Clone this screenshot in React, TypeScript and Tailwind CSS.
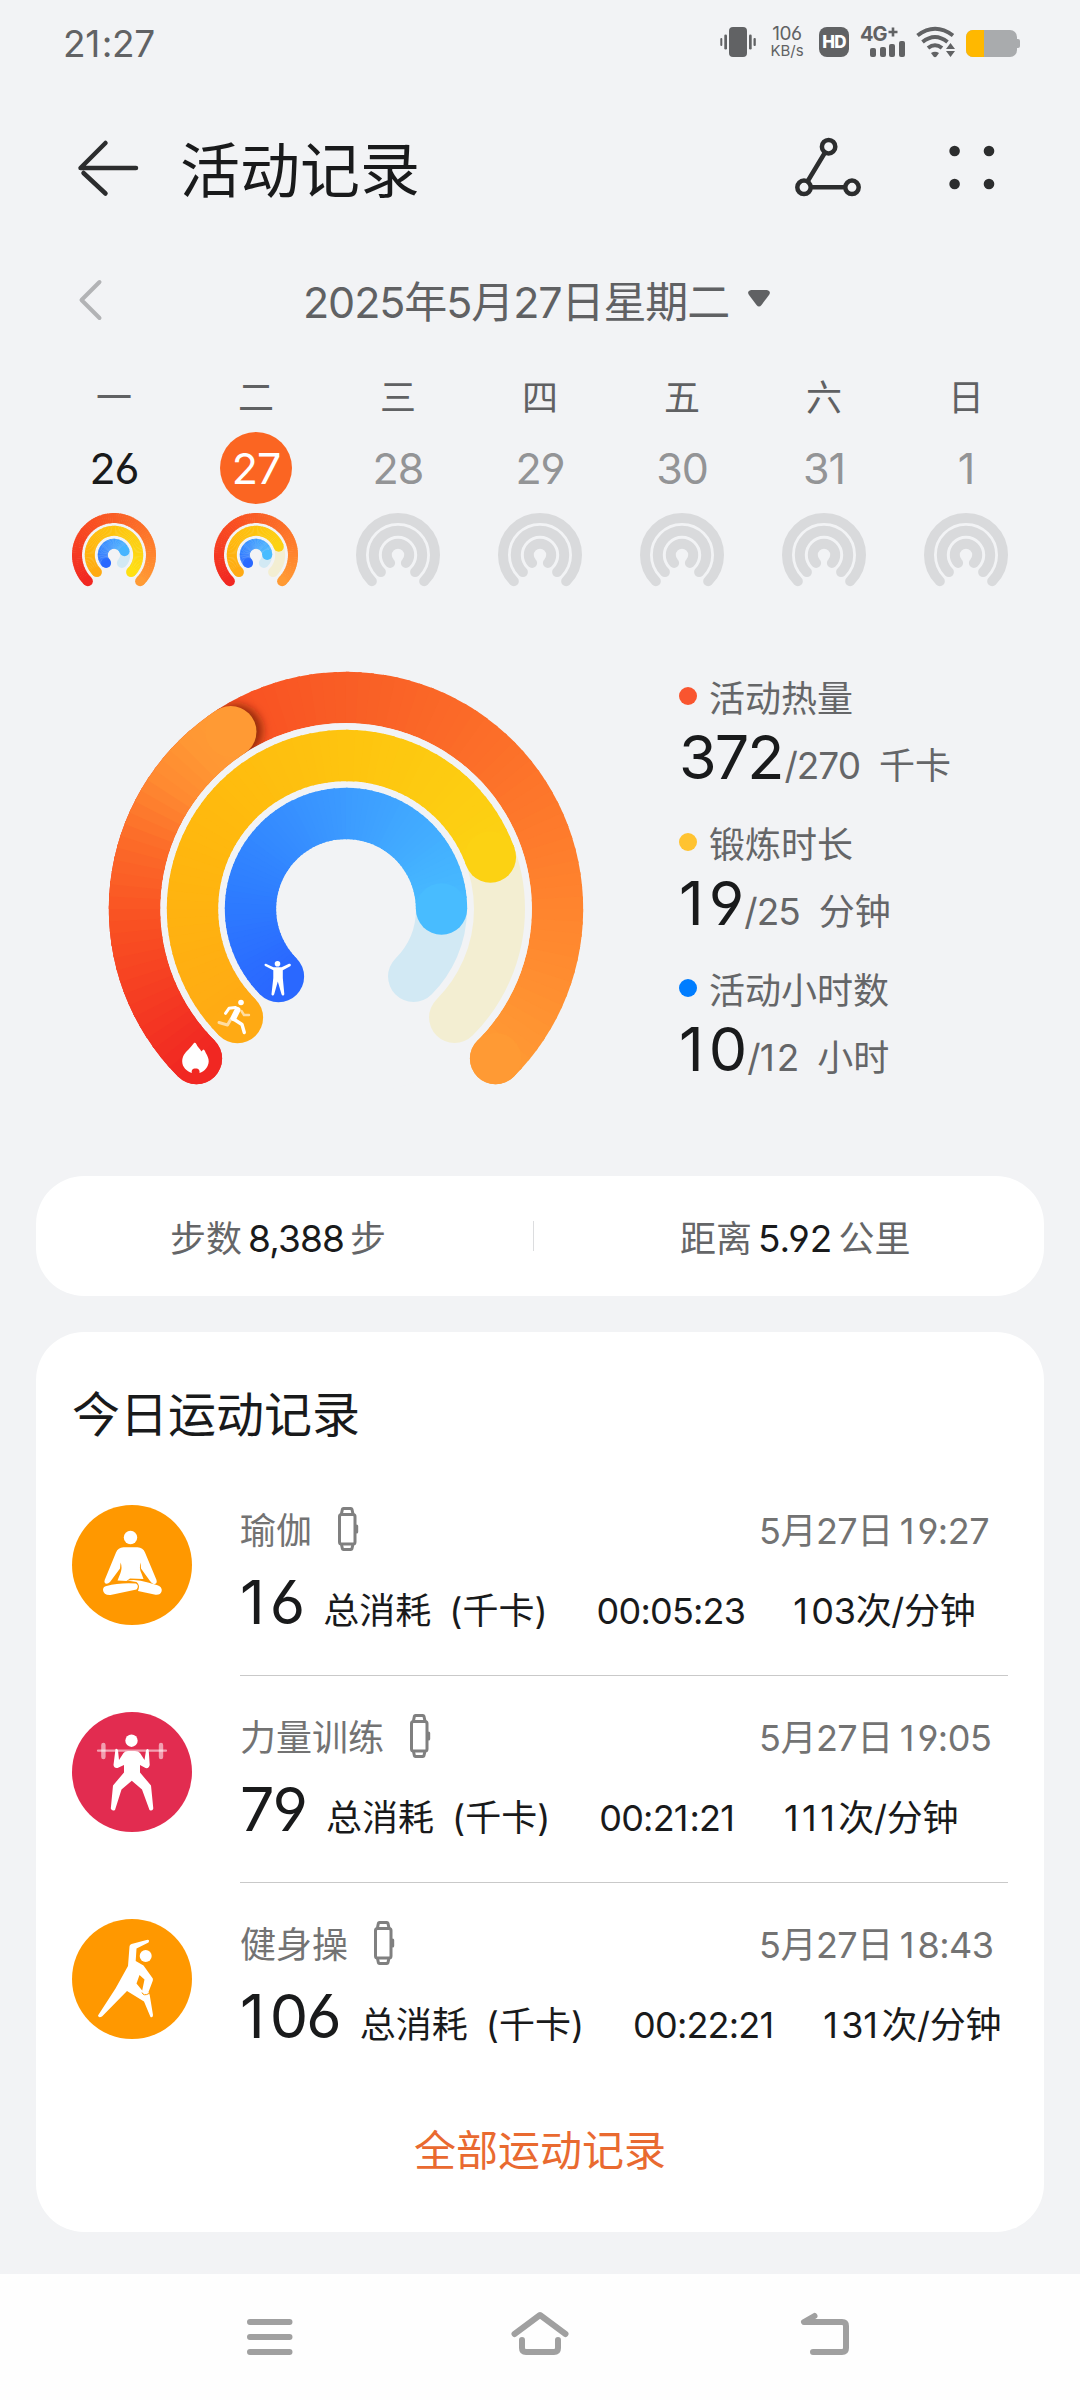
import React from "react";

type Stop = [number, string];

const RED: Stop[] = [[0, "#f12722"], [0.38, "#f95022"], [0.52, "#f96026"], [0.66, "#fc6f29"], [0.83, "#ff842e"], [1, "#ff9a34"]];
const RED_LAP: Stop[] = [[0, "#f12722"], [0.4, "#f95022"], [0.62, "#fc6c29"], [0.78, "#ff8a31"], [0.9, "#ff9734"], [1, "#ff9a34"]];
const YELLOW: Stop[] = [[0, "#ffaa14"], [0.25, "#ffb70e"], [0.5, "#fec40f"], [0.76, "#fcd213"], [1, "#ffe012"]];
const BLUE: Stop[] = [[0, "#2a68ff"], [0.2, "#2e7dff"], [0.5, "#3c9bff"], [0.83, "#48bcff"], [1, "#4cc4ff"]];

function hex(c: string) {
  return [1, 3, 5].map((i) => parseInt(c.slice(i, i + 2), 16));
}

function mix(stops: Stop[], t: number) {
  let i = 0;
  while (i < stops.length - 2 && t > stops[i + 1][0]) i++;
  const [a, ca] = stops[i];
  const [b, cb] = stops[i + 1];
  const k = Math.min(1, Math.max(0, (t - a) / (b - a)));
  const x = hex(ca);
  const y = hex(cb);
  return `rgb(${x.map((v, j) => Math.round(v + (y[j] - v) * k)).join(",")})`;
}

/* Position on a ring; 0 is the lower-left end, angles grow clockwise. */
function point(cx: number, cy: number, r: number, deg: number) {
  const a = ((225 - deg) * Math.PI) / 180;
  return [cx + r * Math.cos(a), cy - r * Math.sin(a)];
}

function arc(cx: number, cy: number, r: number, from: number, to: number) {
  const [x1, y1] = point(cx, cy, r, from);
  const [x2, y2] = point(cx, cy, r, to);
  return `M${x1} ${y1}A${r} ${r} 0 ${to - from > 180 ? 1 : 0} 1 ${x2} ${y2}`;
}

function GradientArc({ cx, cy, r, w, sweep, stops, scale = 270 }: { cx: number; cy: number; r: number; w: number; sweep: number; stops: Stop[]; scale?: number }) {
  const step = 3;
  const n = Math.ceil(sweep / step);
  const [sx, sy] = point(cx, cy, r, 0);
  const [ex, ey] = point(cx, cy, r, sweep);
  return (
    <g fill="none">
      <circle cx={sx} cy={sy} r={w / 2} fill={mix(stops, 0)} />
      {Array.from({ length: n }, (_, i) => {
        const from = i * step;
        const to = Math.min(sweep, from + step + 0.8);
        return <path key={i} d={arc(cx, cy, r, from, to)} stroke={mix(stops, (from + step / 2) / scale)} strokeWidth={w} />;
      })}
      <circle cx={ex} cy={ey} r={w / 2} fill={mix(stops, sweep / scale)} />
    </g>
  );
}

function Track({ cx, cy, r, w, color }: { cx: number; cy: number; r: number; w: number; color: string }) {
  return <path d={arc(cx, cy, r, 0, 270)} fill="none" stroke={color} strokeWidth={w} strokeLinecap="round" />;
}

function SmallRings({ progress }: { progress?: [number, number, number] }) {
  const radii = [37, 24.2, 11.2];
  const sets = [RED, YELLOW, BLUE];
  const tracks = ["#f6dfd2", "#f3eed2", "#d2e9f4"];
  return (
    <svg width="84" height="84" viewBox="0 0 84 84">
      {radii.map((r, i) => (
        <g key={r}>
          <Track cx={42} cy={42} r={r} w={10} color={progress ? tracks[i] : "#d9dadc"} />
          {progress && <GradientArc cx={42} cy={42} r={r} w={10} sweep={270 * progress[i]} stops={sets[i]} />}
        </g>
      ))}
    </svg>
  );
}

function BigRings() {
  return (
    <svg width="500" height="450" viewBox="96 650 500 450" className="shrink-0">
      <defs>
        <filter id="lap" x="-50%" y="-50%" width="220%" height="200%">
          <feGaussianBlur stdDeviation="5" />
        </filter>
        <clipPath id="outer">
          <path d={`${arc(346, 909, 237.2, 0, 270)}L346 909Z`} />
        </clipPath>
      </defs>
      <GradientArc cx={346} cy={909} r={211.5} w={51.3} sweep={270} stops={RED} />
      <g clipPath="url(#outer)">
        <circle cx={236} cy={731} r={26} fill="#6a1804" fillOpacity="0.75" filter="url(#lap)" />
      </g>
      <circle cx={346} cy={909} r={185.9} fill="#f2f3f5" />
      <GradientArc cx={346} cy={909} r={211.5} w={51.3} sweep={102} stops={RED_LAP} scale={102} />
      <circle cx={point(346, 909, 211.5, 270)[0]} cy={point(346, 909, 211.5, 270)[1]} r="25.6" fill="#ff9a34" />
      <Track cx={346} cy={909} r={153.5} w={51} color="#f3eed2" />
      <GradientArc cx={346} cy={909} r={153.5} w={51.3} sweep={205.2} stops={YELLOW} />
      <Track cx={346} cy={909} r={95.5} w={51} color="#d2e9f4" />
      <GradientArc cx={346} cy={909} r={95.5} w={51.3} sweep={225} stops={BLUE} />
      {/* flame */}
      <path fill="#fff" d="M194 1043c1-.6 1.700 0 2.300 1 1 2.800 3.700 4.500 5.200 7.500.8-1 1.300-1.900 2-2 1.200.2 1.500 2 2.300 3.500 1.600 2.700 3 5.500 2.900 8.500-.3 5.500-3.700 9.500-9.200 11.500.5-2.700-.6-4.500-3.900-4.500s-4.400 1.800-3.700 4.500c-5.400-1.700-9.600-6-9.700-11.500 0-5.200 2.700-8.500 6.300-12 2-2.200 3.800-4.500 5.500-6.500z" />
      {/* runner */}
      <g fill="none" stroke="#fff" strokeLinecap="round" strokeLinejoin="round">
        <g strokeWidth="2.400" strokeOpacity=".6">
          <path d="M241.500 1011l2.500 4h5" />
          <path d="M231 1019l-3.500 6-8.500-2.500" strokeWidth="3" />
        </g>
        <path d="M235.500 1007.500l-6.500.8-3.500 5" strokeWidth="3" />
        <path d="M237.500 1010l-4 8" strokeWidth="6" />
        <path d="M233.500 1019l8.500 5.500 2.300 8" strokeWidth="3.400" />
      </g>
      <circle cx="241" cy="1002.500" r="2.800" fill="#fff" />
      {/* standing figure */}
      <circle cx="277.500" cy="963.700" r="2.800" fill="#fff" />
      <path fill="#fff" d="M264.500 964.500c.4-.9 1.200-1 2-.6l7 3.300h8l7.500-3.400c1.800-.5 2.600 1.300 1.200 2.400l-7.400 4v7.800l1.500 16c-.2 2-2.200 2-2.800.2l-3.700-12.700-3.600 12.700c-.7 1.800-2.800 1.500-2.700-.3l1.800-15.900v-7.800l-7.700-3.900c-.8-.5-1.200-1-1.100-1.800z" />
    </svg>
  );
}

function WatchIcon() {
  return (
    <svg width="21" height="44" viewBox="0 0 21 44" fill="none" stroke="#808080" strokeWidth="3" strokeLinejoin="round">
      <rect x="1.500" y="7.500" width="15.500" height="29.500" rx="2" />
      <path d="M3.400 7L4.400 2.200Q4.600 1.500 5.400 1.500H12.900Q13.700 1.500 13.900 2.200L15 7M3.400 37l1 4.800q.2.700 1 .7h7.500q.8 0 1-.7l1.100-4.800" />
      <path d="M18.700 19v6" strokeLinecap="round" />
    </svg>
  );
}

function YogaIcon() {
  return (
    <svg width="120" height="120" viewBox="0 0 120 120" fill="#fff">
      <circle cx="58.500" cy="32.500" r="6.700" />
      <path d="M51.500 42.300H65.500Q71 42.600 73 47.500L84.500 75Q85.500 79 82 79.200Q80 78.800 78 76L69 63.500L68.600 57.500Q66.800 63 69.500 68.500L71.500 74L58 73.500L54.500 76L45.500 75.500L48.500 68Q50.500 62.500 48.600 57.500L48 63.500L38 77Q35.500 79.500 33 78.300Q32 77 32.700 75L44 47.500Q46 42.600 51.500 42.300Z" />
      <path d="M34.500 81Q47 77.500 64 78.500Q67.500 80.500 64.500 84.500L38.500 90Q31.500 90.300 31 85Q31 81.500 34.500 81Z" />
      <path d="M55 75.500Q65 73.600 76 77.500L85.500 80.200Q90.300 82 89.700 86Q88.500 90.300 83.500 89.800L66 86Q68.500 80 64.500 77Z" />
    </svg>
  );
}

function StrengthIcon() {
  return (
    <svg width="120" height="120" viewBox="0 0 120 120" fill="#fff">
      <circle cx="59.500" cy="28.700" r="6.200" />
      <g stroke="#fff" strokeOpacity=".55" strokeLinecap="round" fill="none">
        <path d="M26 38.700H94" strokeWidth="2.200" />
        <path d="M31.400 33V45M89 33V45" strokeWidth="4.400" />
      </g>
      <path d="M43.500 37Q45.500 36.300 46 38.500L47 48L51.500 41Q53 39 56 39H63Q66.500 39 68 41L72.500 48L74 38.500Q75.500 35.800 76.700 38L77.700 53Q77 56.800 73.500 56L68 53V60.500L79 73.500L81.300 96.500Q80.500 99.500 77.500 98L70 77.500L59.800 68.800L49.500 77.500L43 98Q40 99.500 38.800 96.500L41 73.500L52 60.500V53L45.500 56Q42 56.500 41.500 53Z" />
    </svg>
  );
}

function AerobicsIcon() {
  return (
    <svg width="120" height="120" viewBox="0 0 120 120" fill="#fff">
      <circle cx="73.700" cy="37" r="6" />
      <path
        fillRule="evenodd"
        d="M57.500 27.500Q57.500 25.500 59.500 25L75.500 20.800Q78 21 76.500 23.500L64.500 29.500L63.700 42L71.500 46.500L80.800 59.500Q81.200 61 80.500 62.500L76.500 73L77.700 76L81 96Q81 98.800 78.500 98L72 82.500L55 72L30 97.500Q26.500 99.500 26 96.500L43.500 69.500L56 47ZM67.500 56L64.500 64.500L70.200 71.500L72.500 60.500Z"
      />
      <path d="M70 73.500Q71.500 77.500 77 74.500" fill="none" stroke="#ff9800" strokeWidth="1" />
    </svg>
  );
}

/* Sets the narrow digit 1 with a wider advance, like the other digits. */
function Num({ text, one }: { text: string; one: string }) {
  return (
    <>
      {text.split(/(1)/).map((part, i) => (part === "1" ? <span key={i} className={one}>1</span> : part))}
    </>
  );
}

const WEEK = [
  { day: "一", date: "26", tone: "text-[#191a1b]", progress: [1, 1, 0.76] as [number, number, number] },
  { day: "二", date: "27", tone: "bg-[#fb6522] text-white", progress: [1, 0.76, 0.833] as [number, number, number] },
  { day: "三", date: "28", tone: "text-[#939496]" },
  { day: "四", date: "29", tone: "text-[#939496]" },
  { day: "五", date: "30", tone: "text-[#939496]" },
  { day: "六", date: "31", tone: "text-[#939496]" },
  { day: "日", date: "1", tone: "text-[#939496]" },
];

const STATS = [
  { dot: "bg-[#f9552f]", label: "活动热量", value: "372", goal: "/270", unit: "千卡" },
  { dot: "bg-[#ffc331]", label: "锻炼时长", value: "19", goal: "/25", unit: "分钟" },
  { dot: "bg-[#007dff]", label: "活动小时数", value: "10", goal: "/12", unit: "小时" },
];

const WORKOUTS = [
  { name: "瑜伽", color: "bg-[#ff9800]", icon: <YogaIcon />, day: "5月27日", at: "19:27", kcal: "16", time: "00:05:23", rate: "103次/分钟" },
  { name: "力量训练", color: "bg-[#e22c50]", icon: <StrengthIcon />, day: "5月27日", at: "19:05", kcal: "79", time: "00:21:21", rate: "111次/分钟" },
  { name: "健身操", color: "bg-[#ff9800]", icon: <AerobicsIcon />, day: "5月27日", at: "18:43", kcal: "106", time: "00:22:21", rate: "131次/分钟" },
];

function StatusBar() {
  return (
    <div className="flex h-[84px] items-center pl-[63px] pr-[60px] text-[#616264]">
      <span className="mt-[3px] text-[37px] leading-none tracking-[-0.4px]">
        <Num text="21:27" one="tracking-[1.5px]" />
      </span>
      <div className="ml-auto flex items-center">
        <svg width="37" height="32" viewBox="0 0 37 32" fill="#616264">
          <rect x="9" y="1" width="18" height="30" rx="4" />
          <rect x="4.300" y="8.500" width="2.700" height="15" rx="1.300" />
          <rect x="0.300" y="12" width="2" height="8" rx="1" />
          <rect x="29" y="8.500" width="2.700" height="15" rx="1.300" />
          <rect x="33.500" y="12" width="2.300" height="8" rx="1" />
        </svg>
        <div className="ml-[12px] flex w-[36px] flex-col items-center">
          <span className="text-[19px] leading-[16px] tracking-[-0.4px]">106</span>
          <span className="mt-px text-[15px] leading-[15px]">KB/s</span>
        </div>
        <div className="ml-[14px] flex h-[30px] w-[30px] items-center justify-center rounded-[8px] bg-[#616264] text-[17px] font-extrabold leading-none tracking-[-0.8px] text-white">HD</div>
        <div className="ml-[11px] flex h-[30px] w-[46px] flex-col">
          <span className="flex h-[14px] text-[20px] font-bold leading-[15px] tracking-[-1px]">
            4G
            <svg className="ml-[1px]" width="10" height="10" viewBox="0 0 10 10" stroke="#616264" strokeWidth="2.600">
              <path d="M5 0.500V9.500M0.500 5H9.500" />
            </svg>
          </span>
          <div className="ml-[10px] flex h-[16px] items-end gap-[3.500px]">
            <i className="h-[9px] w-[6px] rounded-[2px] bg-[#616264]" />
            <i className="h-[10px] w-[6px] rounded-[2px] bg-[#616264]" />
            <i className="h-[13px] w-[6px] rounded-[2px] bg-[#616264]" />
            <i className="h-[16px] w-[6px] rounded-[2px] bg-[#616264]" />
          </div>
        </div>
        <svg className="ml-[10px]" width="40" height="32" viewBox="0 0 40 32" fill="none" stroke="#616264">
          <path d="M1.500 9.500Q19 -4 37 9.500" strokeWidth="4" />
          <path d="M6.500 16Q19 6 31.500 16" strokeWidth="4" />
          <path d="M12 22Q19 16.500 26 22" strokeWidth="4" />
          <path d="M15 27Q19 24.500 23 27L20.500 30.500Q19 32 17.500 30.500Z" fill="#616264" stroke="none" />
          <path d="M34.500 17L39 23H30ZM30 25H39L34.500 31Z" fill="#616264" stroke="none" />
        </svg>
        <div className="ml-[10px] mt-[2px] flex h-[27px] w-[51px] overflow-hidden rounded-[7px] bg-[#a9abad]">
          <div className="w-[18px] bg-[#ffb800]" />
        </div>
        <div className="mt-[2px] h-[9px] w-[3px] rounded-r-[2px] bg-[#a9abad]" />
      </div>
    </div>
  );
}

export default function App() {
  return (
    <div className="flex h-[2400px] w-[1080px] flex-col overflow-hidden bg-[#f2f3f5] font-['Inter','Noto_Sans_CJK_SC',sans-serif] [font-feature-settings:'cv03','cv04']" lang="zh-CN">
      <StatusBar />

      <header className="mt-[44px] flex h-[80px] items-center pl-[76px] pr-[85px]">
        <svg width="64" height="60" viewBox="0 0 64 60" fill="none" stroke="#2c2d2e" strokeWidth="4.500" strokeLinecap="round" strokeLinejoin="round">
          <path d="M60 30H4.500L29.500 5M7.500 35L29.500 55.500" />
        </svg>
        <h1 className="ml-[40px] mt-[5px] text-[60px] leading-none text-[#191a1b]">活动记录</h1>
        <svg className="ml-auto" width="70" height="64" viewBox="0 0 70 64" fill="none" stroke="#2c2d2e" strokeWidth="4.500">
          <circle cx="35.600" cy="10.700" r="6.700" />
          <circle cx="11" cy="51.300" r="6.700" />
          <circle cx="59" cy="51.300" r="6.700" />
          <path d="M32 16.500L14.500 45.500M18 51.300H52" />
        </svg>
        <svg className="ml-[82px]" width="50" height="50" viewBox="0 0 50 50" fill="#2c2d2e">
          <circle cx="9.600" cy="8" r="5.300" />
          <circle cx="44" cy="8" r="5.300" />
          <circle cx="9.600" cy="41" r="5.300" />
          <circle cx="44" cy="41" r="5.300" />
        </svg>
      </header>

      <div className="mt-[62px] flex h-[64px] items-center">
        <svg className="-mt-1 ml-[76px]" width="28" height="44" viewBox="0 0 28 44" fill="none" stroke="#b2b3b5" strokeWidth="4" strokeLinecap="round" strokeLinejoin="round">
          <path d="M23.500 4L5.500 22L23.500 40" />
        </svg>
        <span className="ml-[199px] whitespace-nowrap text-[43px] leading-none tracking-[-1.1px] text-[#606163]">2025年5月27日星期二</span>
        <svg className="-mt-2 ml-[19px]" width="22" height="17" viewBox="0 0 22 17" fill="#606163">
          <path d="M3 0H19Q23.500 1 21 5L13.500 15Q11 18 8.500 15L1 5Q-1.500 1 3 0Z" />
        </svg>
      </div>

      <div className="mt-[44px] grid grid-cols-7 px-[43px]">
        {WEEK.map((d) => (
          <div key={d.day} className="flex flex-col items-center">
            <span className="h-[40px] text-[36px] leading-[40px] text-[#606163]">{d.day}</span>
            <span className={`mt-[14px] flex h-[72px] w-[72px] items-center justify-center rounded-full text-[43px] leading-none tracking-[-1px] ${d.tone}`}>{d.date}</span>
            <div className="mt-[9px] h-[84px]">
              <SmallRings progress={d.progress} />
            </div>
          </div>
        ))}
      </div>

      <section className="mt-[53px] flex h-[526px] pl-[96px]">
        <BigRings />
        <div className="ml-[83px] flex flex-col gap-[35px] pt-[26px]">
          {STATS.map((s) => (
            <div key={s.label} className="h-[111px]">
              <div className="flex h-[44px] items-center">
                <span className={`mb-[4px] h-[18px] w-[18px] rounded-full ${s.dot}`} />
                <span className="ml-[12px] mt-px text-[36px] leading-[44px] text-[#656668]">{s.label}</span>
              </div>
              <div className="mt-[7px] flex items-baseline whitespace-nowrap text-[36px] text-[#656668]">
                <span className="text-[61px] leading-[60px] tracking-[-2px] text-[#191a1b]">
                  <Num text={s.value} one="tracking-[5px]" />
                </span>
                <span className="ml-[2px] text-[37px] leading-none tracking-[-1px]">
                  <Num text={s.goal} one="tracking-[2px]" />
                </span>
                <span className="ml-[19px] text-[36px] leading-none">{s.unit}</span>
              </div>
            </div>
          ))}
        </div>
      </section>

      <section className="mx-[36px] flex h-[120px] shrink-0 items-center rounded-[48px] bg-white text-[36px] leading-none text-[#656668]">
        <div className="flex w-[497px] items-baseline pl-[134px] pt-[4px]">
          步数<span className="mx-[6px] text-[37px] tracking-[-0.9px] text-[#191a1b]">8,388</span>步
        </div>
        <div className="h-[30px] w-px bg-[#dcdddf]" />
        <div className="flex items-baseline pl-[146px] pt-[4px]">
          距离<span className="mx-[6px] text-[37px] tracking-[0px] text-[#191a1b]">5.92</span>公里
        </div>
      </section>

      <section className="mx-[36px] mt-[36px] h-[900px] shrink-0 rounded-[48px] bg-white pl-[36px] pr-[36px]">
        <h2 className="pt-[59px] text-[48px] leading-[48px] text-[#191a1b]">今日运动记录</h2>
        <div className="mt-[30px]">
          {WORKOUTS.map((w, i) => (
            <div key={w.name} className="flex h-[207px]">
              <div className={`mt-[36px] h-[120px] w-[120px] shrink-0 rounded-full ${w.color}`}>{w.icon}</div>
              <div className={`ml-[48px] flex w-[768px] flex-col ${i < 2 ? "border-b border-[#c9c9c9]" : ""}`}>
                <div className="mt-[38px] flex h-[44px] items-center text-[36px] leading-[44px] text-[#737373]">
                  <span className="mt-[4px]">{w.name}</span>
                  <div className="ml-[26px]">
                    <WatchIcon />
                  </div>
                  <div className="ml-auto mt-[3px] flex w-[249px] whitespace-nowrap tracking-[-0.5px]">
                    <span>{w.day}</span>
                    <span className="ml-[7px]">
                      <Num text={w.at} one="tracking-[3px]" />
                    </span>
                  </div>
                </div>
                <div className="mt-[21px] flex items-baseline whitespace-nowrap text-[36px] leading-none text-[#191a1b]">
                  <span className="text-[61px] leading-[60px] tracking-[-2px]">
                    <Num text={w.kcal} one="tracking-[5px]" />
                  </span>
                  <span className="ml-[20px]">总消耗</span>
                  <span className="ml-[18px]">(千卡)</span>
                  <span className="ml-[49px] tracking-[-0.8px]">
                    <Num text={w.time} one="tracking-[1px]" />
                  </span>
                  <span className="ml-[48px] tracking-[-0.3px]">
                    <Num text={w.rate} one="tracking-[3.500px]" />
                  </span>
                </div>
              </div>
            </div>
          ))}
        </div>
        <div className="mt-[37px] text-center text-[42px] leading-[48px] text-[#e96a30]">全部运动记录</div>
      </section>

      <nav className="mt-[42px] flex h-[126px] shrink-0 bg-[#fefefe] pl-[244px] pt-[34px]">
        <svg width="52" height="54" viewBox="244 2308 52 54" stroke="#a0a0a0" strokeWidth="6" strokeLinecap="round">
          <path d="M250 2322H289.500M250 2337H289.500M250 2352H289.500" />
        </svg>
        <svg className="ml-[212px]" width="64" height="54" viewBox="508 2308 64 54" fill="none" stroke="#a0a0a0" strokeWidth="6" strokeLinecap="round" strokeLinejoin="round">
          <path d="M514.500 2334L540 2315L565.500 2334" />
          <path d="M522 2340V2348Q522 2352 526 2352H554Q558 2352 558 2348V2340" />
        </svg>
        <svg className="ml-[224px]" width="58" height="54" viewBox="796 2308 58 54" fill="none" stroke="#a0a0a0" strokeWidth="6" strokeLinecap="round" strokeLinejoin="round">
          <path d="M814.500 2316L804 2322H842Q846 2322 846 2326V2348Q846 2352 842 2352H813" />
        </svg>
      </nav>
    </div>
  );
}
